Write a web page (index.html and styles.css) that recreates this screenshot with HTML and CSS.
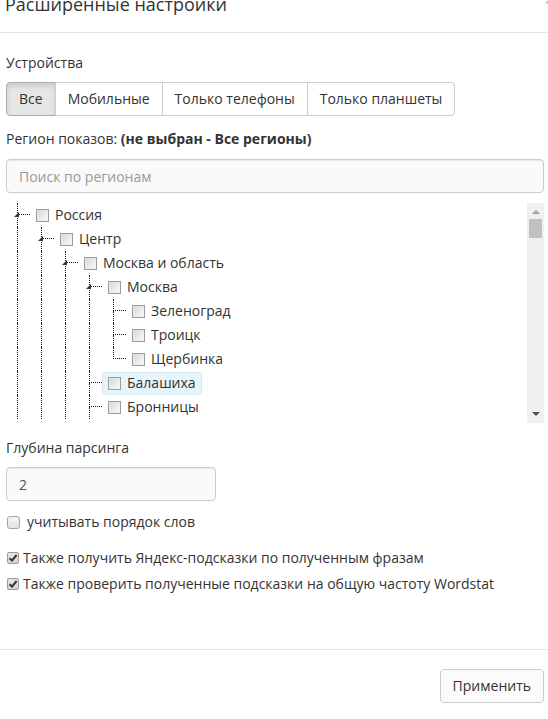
FILE: index.html
```html
<!DOCTYPE html>
<html lang="ru">
<head>
  <meta charset="UTF-8">
  <title>Расширенные настройки</title>
  <link rel="stylesheet" href="styles.css">
</head>
<body>
  <div class="modal">
    <div class="modal-header">
      <button class="close">&times;</button>
      <h4 class="modal-title">Расширенные настройки</h4>
    </div>

    <div class="modal-body">
      <div class="label">Устройства</div>
      <div class="btn-group">
        <button class="btn active">Все</button>
        <button class="btn">Мобильные</button>
        <button class="btn">Только телефоны</button>
        <button class="btn">Только планшеты</button>
      </div>

      <div class="label region">Регион показов: <b>(не выбран - Все регионы)</b></div>
      <input class="form-control search" type="text" placeholder="Поиск по регионам">

      <div class="tree-box">
        <div class="tree">
          <div class="row">
            <span class="conn open"><span class="top"></span><span class="bot"></span></span>
            <span class="node"><span class="cb"></span>Россия</span>
          </div>
          <div class="row">
            <span class="guide"></span>
            <span class="conn open"><span class="top"></span><span class="bot"></span></span>
            <span class="node"><span class="cb"></span>Центр</span>
          </div>
          <div class="row">
            <span class="guide"></span><span class="guide"></span>
            <span class="conn open"><span class="top"></span><span class="bot"></span></span>
            <span class="node"><span class="cb"></span>Москва и область</span>
          </div>
          <div class="row">
            <span class="guide"></span><span class="guide"></span><span class="guide"></span>
            <span class="conn open"><span class="top"></span><span class="bot"></span></span>
            <span class="node"><span class="cb"></span>Москва</span>
          </div>
          <div class="row">
            <span class="guide"></span><span class="guide"></span><span class="guide"></span><span class="guide"></span>
            <span class="conn"><span class="top"></span><span class="bot"></span></span>
            <span class="node"><span class="cb"></span>Зеленоград</span>
          </div>
          <div class="row">
            <span class="guide"></span><span class="guide"></span><span class="guide"></span><span class="guide"></span>
            <span class="conn"><span class="top"></span><span class="bot"></span></span>
            <span class="node"><span class="cb"></span>Троицк</span>
          </div>
          <div class="row">
            <span class="guide"></span><span class="guide"></span><span class="guide"></span><span class="guide"></span>
            <span class="conn"><span class="top"></span></span>
            <span class="node"><span class="cb"></span>Щербинка</span>
          </div>
          <div class="row">
            <span class="guide"></span><span class="guide"></span><span class="guide"></span>
            <span class="conn"><span class="top"></span><span class="bot"></span></span>
            <span class="node hovered"><span class="cb"></span>Балашиха</span>
          </div>
          <div class="row">
            <span class="guide"></span><span class="guide"></span><span class="guide"></span>
            <span class="conn"><span class="top"></span><span class="bot"></span></span>
            <span class="node"><span class="cb"></span>Бронницы</span>
          </div>
        </div>

        <!-- fake scrollbar -->
        <div class="scrollbar">
          <span class="arrow-up"></span>
          <div class="track"><span class="thumb"></span></div>
          <span class="arrow-down"></span>
        </div>
      </div>

      <div class="label depth">Глубина парсинга</div>
      <input class="form-control depth-input" type="text" value="2">

      <div class="check order"><span class="box"></span> учитывать порядок слов</div>
      <div class="check suggest">
        <span class="box checked"><svg width="12" height="12" viewBox="0 0 12 12"><path d="M2.5 6.2 L5 8.6 L9.6 3" fill="none" stroke="#333" stroke-width="2"/></svg></span>
        Также получить Яндекс-подсказки по полученным фразам
      </div>
      <div class="check wordstat">
        <span class="box checked"><svg width="12" height="12" viewBox="0 0 12 12"><path d="M2.5 6.2 L5 8.6 L9.6 3" fill="none" stroke="#333" stroke-width="2"/></svg></span>
        Также проверить полученные подсказки на общую частоту Wordstat
      </div>
    </div>

    <div class="modal-footer">
      <button class="btn">Применить</button>
    </div>
  </div>
</body>
</html>
```

FILE: styles.css
```css
/* Global */
body {
  margin: 0;
  font-family: 'Open Sans', 'Liberation Sans', sans-serif;
  font-size: 14px;
  line-height: 20px;
  color: #333;
  background: #fff;
  overflow: hidden;
}

.modal {
  margin-top: -24px;
}

/* Header */
.modal-header {
  padding: 15px 4px 15px 5px;
  border-bottom: 1px solid #e5e5e5;
}

.modal-title {
  margin: 0;
  font-size: 18px;
  font-weight: normal;
  line-height: 26px;
}

.close {
  float: right;
  margin: -2px -12px 0 0;
  padding: 0;
  border: 0;
  background: none;
  font-family: 'Open Sans', sans-serif;
  font-size: 21px;
  font-weight: bold;
  line-height: 1;
  color: #000;
  opacity: 0.2;
}

/* Body */
.modal-body {
  padding: 20px 4px 55px 6px;
}

.label {
  margin-bottom: 9px;
}

.region {
  margin-top: 13px;
  margin-bottom: 10px;
}

.depth {
  margin-top: 15px;
}

.btn-group {
  display: flex;
}

.btn {
  font-family: 'Open Sans', sans-serif;
  font-size: 14px;
  line-height: 20px;
  color: #333;
  background: #fff;
  border: 1px solid #ccc;
  padding: 6px 12px;
  border-radius: 4px;
}

.btn-group .btn {
  border-radius: 0;
  margin-left: -1px;
}

.btn-group .btn:first-child {
  margin-left: 0;
  border-radius: 4px 0 0 4px;
}

.btn-group .btn:last-child {
  border-radius: 0 4px 4px 0;
}

.btn.active {
  background: #e6e6e6;
  border-color: #adadad;
  box-shadow: inset 0 3px 5px rgba(0, 0, 0, 0.125);
}

.form-control {
  display: block;
  box-sizing: border-box;
  height: 34px;
  padding: 6px 12px;
  font-family: 'Open Sans', sans-serif;
  font-size: 14px;
  color: #555;
  background: #fafafa;
  border: 1px solid #ccc;
  border-radius: 4px;
  box-shadow: inset 0 1px 1px rgba(0, 0, 0, 0.075);
}

.form-control::placeholder {
  color: #999;
}

.search {
  width: 100%;
}

.depth-input {
  width: 210px;
}

/* Region tree */
.tree-box {
  display: flex;
  height: 220px;
  margin-top: 10px;
}

.tree {
  flex: 1;
  overflow: hidden;
}

.row {
  display: flex;
  align-items: center;
  height: 24px;
  white-space: nowrap;
}

.guide {
  flex: none;
  box-sizing: border-box;
  width: 13px;
  height: 24px;
  margin-left: 11px;
  border-left: 1px dotted #111;
}

.conn {
  flex: none;
  position: relative;
  display: grid;
  grid-template-columns: 11px 13px;
  grid-template-rows: 12px 12px;
  width: 24px;
  height: 24px;
}

.conn .top {
  grid-column: 2;
  grid-row: 1;
  border-left: 1px dotted #111;
  border-bottom: 1px dotted #111;
}

.conn .bot {
  grid-column: 2;
  grid-row: 2;
  border-left: 1px dotted #111;
}

/* expanded node marker */
.conn.open::after {
  content: "";
  position: absolute;
  left: 8px;
  top: 9px;
  width: 0;
  height: 0;
  border-style: solid;
  border-width: 0 0 5px 5px;
  border-color: transparent transparent #333 transparent;
}

.node {
  display: flex;
  align-items: center;
  gap: 6px;
  height: 21px;
  padding: 0 5px;
  border: 1px solid transparent;
  border-radius: 2px;
}

.node.hovered {
  background: #e7f4f9;
  border-color: #d6e9f2;
}

.cb {
  box-sizing: border-box;
  width: 13px;
  height: 13px;
  border: 1px solid #9c9c9c;
  background: linear-gradient(135deg, #d2d2d2 0%, #eeeeee 60%, #f8f8f8 100%);
  box-shadow: inset 1px 1px 0 #e8e8e8;
}

.scrollbar {
  flex: none;
  display: flex;
  flex-direction: column;
  align-items: center;
  width: 17px;
  background: #f0f0f0;
}

.arrow-up,
.arrow-down {
  flex: none;
  width: 0;
  height: 0;
  border-left: 4px solid transparent;
  border-right: 4px solid transparent;
}

.arrow-up {
  margin: 7px 0 5px;
  border-bottom: 4px solid #a3a3a3;
}

.arrow-down {
  margin: 4px 0 7px;
  border-top: 4px solid #505050;
}

.track {
  flex: 1;
  align-self: stretch;
  display: flex;
  justify-content: center;
}

.thumb {
  width: 13px;
  height: 19px;
  background: #c1c1c1;
}

/* Checkbox rows */
.check {
  display: flex;
  align-items: center;
  gap: 4px;
  padding-left: 1px;
}

.order {
  margin-top: 11px;
}

.suggest {
  margin-top: 16px;
}

.wordstat {
  margin-top: 6px;
}

.box {
  flex: none;
  box-sizing: border-box;
  width: 12px;
  height: 12px;
  border: 1px solid #a6a6a6;
  border-radius: 3px;
  background: linear-gradient(180deg, #f4f4f4, #e2e2e2);
  display: flex;
  align-items: center;
  justify-content: center;
}

.order .box {
  width: 13px;
  height: 13px;
  margin-right: 3px;
}

.box.checked {
  border-radius: 2px;
  border-color: #9a9a9a;
  background: linear-gradient(180deg, #e6e6e6, #d4d4d4);
}

.box svg {
  flex: none;
}

/* Footer */
.modal-footer {
  display: flex;
  justify-content: flex-end;
  padding: 19px 4px 15px;
  border-top: 1px solid #e5e5e5;
}

.modal-footer .btn {
  background: #fbfbfb;
}
```
